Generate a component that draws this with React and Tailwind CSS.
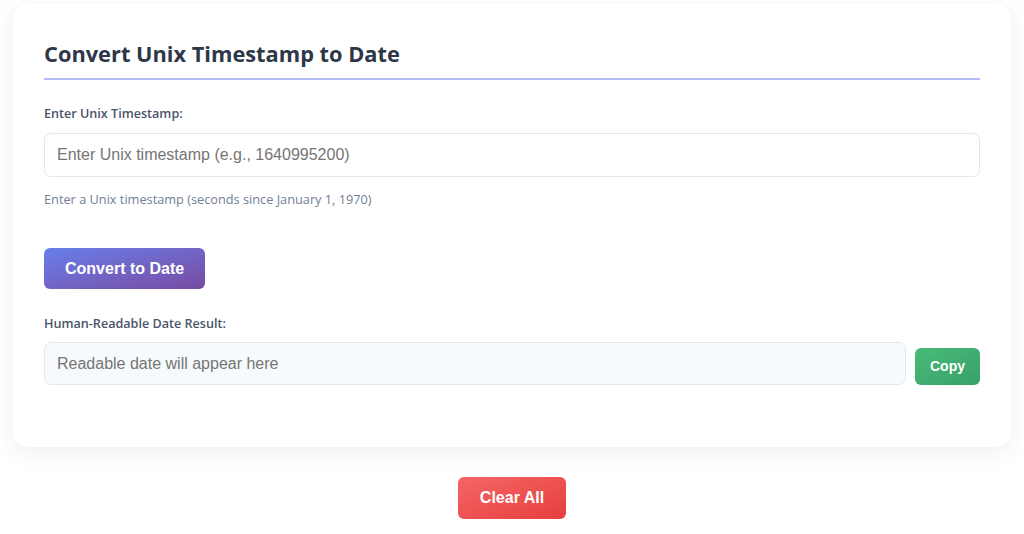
export default function App() {
  const ui = { fontFamily: '"Open Sans", "Noto Sans", sans-serif' };
  const arial = { fontFamily: '"Liberation Sans", Arial, sans-serif' };
  return (
    <div className="min-h-[534px] bg-white pt-[4px]" style={ui}>
      <div className="mx-[13px] rounded-[14px] bg-white px-[31px] pt-[35px] pb-[62px] shadow-[0_4px_24px_rgba(0,0,0,0.07)]">
        <h2 className="border-b-2 border-[#b3bdf3] pb-[10px] text-[21.8px] font-bold leading-[29px] text-[#2d3748]">
          Convert Unix Timestamp to Date
        </h2>
        <div className="mt-[24px]">
          <label className="block text-[12.6px] font-semibold leading-[20px] text-[#4a5568]">
            Enter Unix Timestamp:
          </label>
          <input
            type="text"
            placeholder="Enter Unix timestamp (e.g., 1640995200)"
            className="mt-[9px] block h-[44px] w-full rounded-[7px] border border-[#e2e8f0] bg-white px-[12px] text-[16px] text-[#2d3748] outline-none placeholder:text-[#757575]"
            style={arial}
          />
          <p className="mt-[12px] text-[12.75px] leading-[20px] text-[#718096]">
            Enter a Unix timestamp (seconds since January 1, 1970)
          </p>
        </div>
        <button
          className="mt-[39px] h-[41px] rounded-[6px] bg-gradient-to-br from-[#667eea] to-[#764ba2] px-[21px] text-[16px] font-bold text-white"
          style={arial}
        >
          Convert to Date
        </button>
        <div className="mt-[25px]">
          <label className="block text-[12.6px] font-semibold leading-[20px] text-[#4a5568]">
            Human-Readable Date Result:
          </label>
          <div className="mt-[8px] flex items-end gap-[9px]">
            <div
              className="flex h-[43px] flex-1 items-center rounded-[7px] border border-[#e2e8f0] bg-[#f7fafc] px-[12px] text-[16px] text-[#757575]"
              style={arial}
            >
              Readable date will appear here
            </div>
            <button
              className="h-[37px] rounded-[6px] bg-gradient-to-br from-[#48bb78] to-[#38a169] px-[15px] text-[14px] font-bold text-white"
              style={arial}
            >
              Copy
            </button>
          </div>
        </div>
      </div>
      <div className="mt-[30px] flex justify-center">
        <button
          className="h-[42px] w-[108px] rounded-[6px] bg-gradient-to-br from-[#f56565] to-[#e53e3e] text-[16px] font-bold text-white"
          style={arial}
        >
          Clear All
        </button>
      </div>
    </div>
  );
}
